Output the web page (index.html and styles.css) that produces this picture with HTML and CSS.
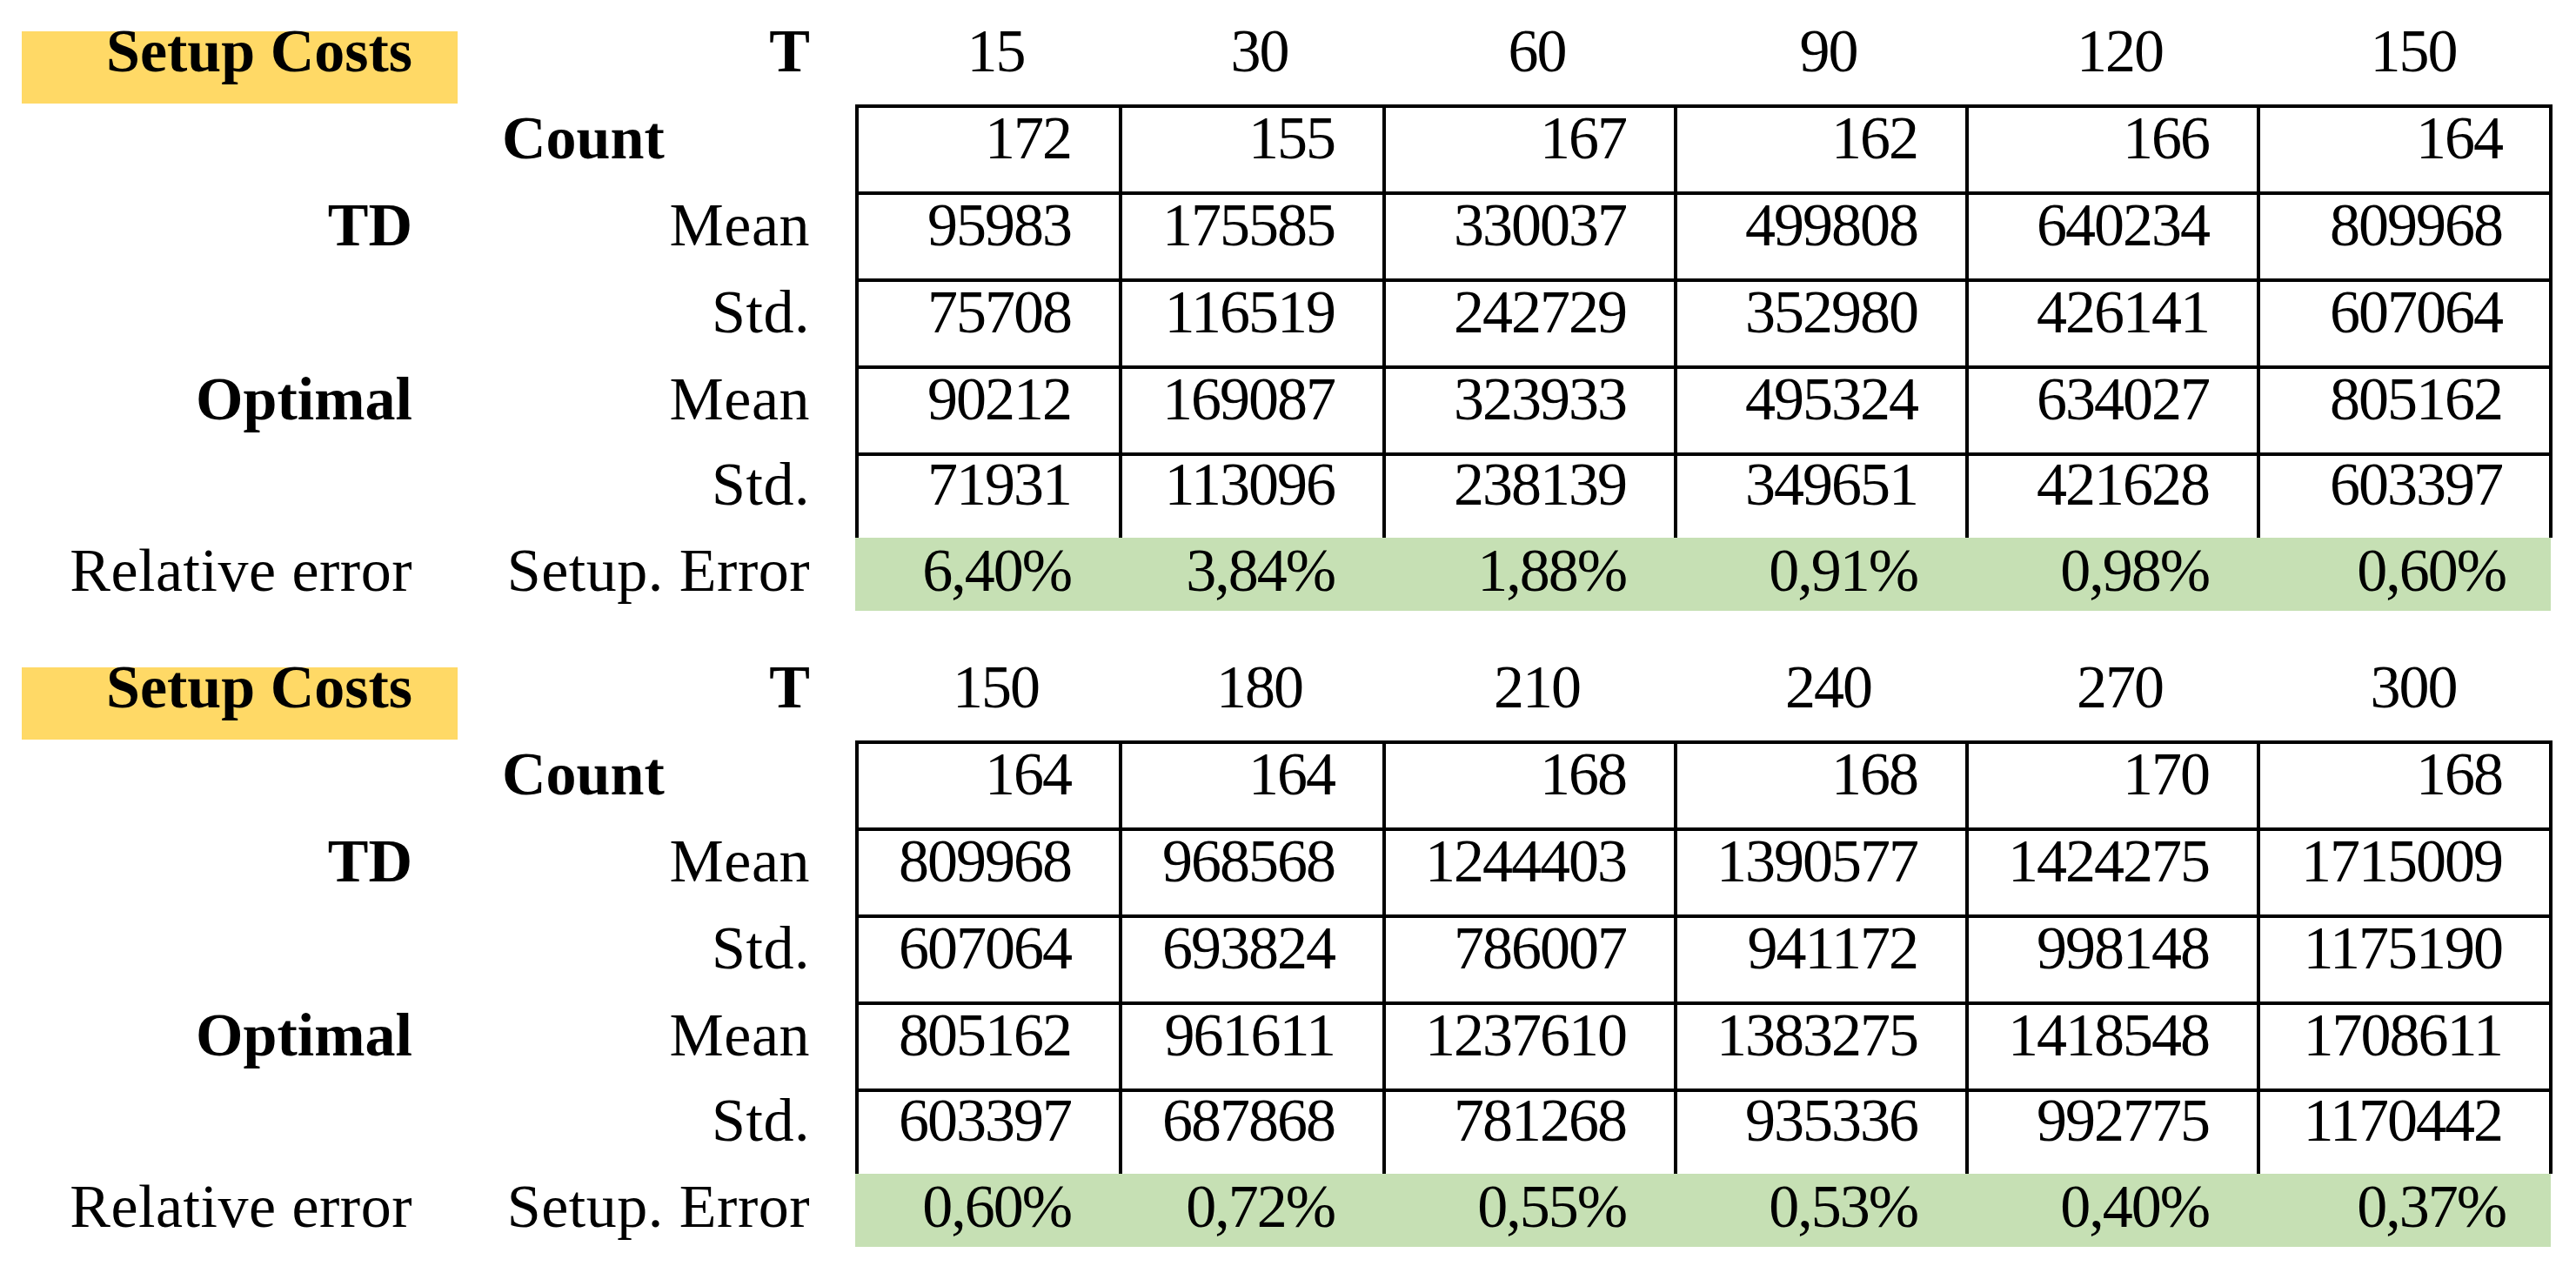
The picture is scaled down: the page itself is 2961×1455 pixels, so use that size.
FILE: index.html
```html
<!DOCTYPE html>
<html>
<head>
<meta charset="utf-8">
<link rel="stylesheet" href="styles.css">
<title>Setup Costs</title>
</head>
<body>
<div class="page">
  <div class="tbl">
    <div class="c title lbl b">Setup Costs</div>
    <div class="c lbl b">T</div>
    <div class="c hd">15</div><div class="c hd">30</div><div class="c hd">60</div><div class="c hd">90</div><div class="c hd">120</div><div class="c hd">150</div>

    <div class="c"></div>
    <div class="c lbl b left">Count</div>
    <div class="c d top first">172</div><div class="c d top">155</div><div class="c d top">167</div><div class="c d top">162</div><div class="c d top">166</div><div class="c d top last">164</div>

    <div class="c lbl b">TD</div>
    <div class="c lbl">Mean</div>
    <div class="c d first">95983</div><div class="c d">175585</div><div class="c d">330037</div><div class="c d">499808</div><div class="c d">640234</div><div class="c d last">809968</div>

    <div class="c"></div>
    <div class="c lbl">Std.</div>
    <div class="c d first">75708</div><div class="c d">116519</div><div class="c d">242729</div><div class="c d">352980</div><div class="c d">426141</div><div class="c d last">607064</div>

    <div class="c lbl b">Optimal</div>
    <div class="c lbl">Mean</div>
    <div class="c d first">90212</div><div class="c d">169087</div><div class="c d">323933</div><div class="c d">495324</div><div class="c d">634027</div><div class="c d last">805162</div>

    <div class="c"></div>
    <div class="c lbl">Std.</div>
    <div class="c d first">71931</div><div class="c d">113096</div><div class="c d">238139</div><div class="c d">349651</div><div class="c d">421628</div><div class="c d last">603397</div>

    <div class="c lbl err">Relative error</div>
    <div class="c lbl err">Setup. Error</div>
    <div class="c g">6,40%</div><div class="c g">3,84%</div><div class="c g">1,88%</div><div class="c g">0,91%</div><div class="c g">0,98%</div><div class="c g glast">0,60%</div>
  </div>

  <div class="tbl">
    <div class="c title lbl b">Setup Costs</div>
    <div class="c lbl b">T</div>
    <div class="c hd">150</div><div class="c hd">180</div><div class="c hd">210</div><div class="c hd">240</div><div class="c hd">270</div><div class="c hd">300</div>

    <div class="c"></div>
    <div class="c lbl b left">Count</div>
    <div class="c d top first">164</div><div class="c d top">164</div><div class="c d top">168</div><div class="c d top">168</div><div class="c d top">170</div><div class="c d top last">168</div>

    <div class="c lbl b">TD</div>
    <div class="c lbl">Mean</div>
    <div class="c d first">809968</div><div class="c d">968568</div><div class="c d">1244403</div><div class="c d">1390577</div><div class="c d">1424275</div><div class="c d last">1715009</div>

    <div class="c"></div>
    <div class="c lbl">Std.</div>
    <div class="c d first">607064</div><div class="c d">693824</div><div class="c d">786007</div><div class="c d">941172</div><div class="c d">998148</div><div class="c d last">1175190</div>

    <div class="c lbl b">Optimal</div>
    <div class="c lbl">Mean</div>
    <div class="c d first">805162</div><div class="c d">961611</div><div class="c d">1237610</div><div class="c d">1383275</div><div class="c d">1418548</div><div class="c d last">1708611</div>

    <div class="c"></div>
    <div class="c lbl">Std.</div>
    <div class="c d first">603397</div><div class="c d">687868</div><div class="c d">781268</div><div class="c d">935336</div><div class="c d">992775</div><div class="c d last">1170442</div>

    <div class="c lbl err">Relative error</div>
    <div class="c lbl err">Setup. Error</div>
    <div class="c g">0,60%</div><div class="c g">0,72%</div><div class="c g">0,55%</div><div class="c g">0,53%</div><div class="c g">0,40%</div><div class="c g glast">0,37%</div>
  </div>
</div>
</body>
</html>
```

FILE: styles.css
```css
html, body {
  margin: 0;
  padding: 0;
  background: #ffffff;
}

.page {
  padding: 36px 0 0 25px;
  display: flex;
  flex-direction: column;
  gap: 65px;
  font-family: "Liberation Serif", "Times New Roman", serif;
  font-size: 70px;
  line-height: 70px;
  color: #000000;
}

.tbl {
  display: grid;
  grid-template-columns: 501px 457px 303px 303px 335px 335px 335px 340px;
  grid-template-rows: 84px 100px 100px 100px 100px 98px 84px;
}

.c {
  box-sizing: border-box;
  display: flex;
  align-items: flex-end;
  justify-content: flex-end;
  padding: 0 55px 26px 0;
  white-space: nowrap;
  letter-spacing: -2px;
}

.lbl {
  letter-spacing: 0.5px;
  padding-right: 52px;
}

.b {
  font-weight: bold;
  letter-spacing: 0;
}

.left {
  justify-content: flex-start;
  padding-left: 51px;
}

.title {
  background: #ffd966;
  padding-bottom: 25px;
  margin-bottom: 1px;
}

.hd {
  justify-content: center;
  padding: 0 0 26px 20px;
}

.d {
  border-left: 4px solid #000;
  border-top: 4px solid #000;
}

.d.last {
  border-right: 4px solid #000;
  padding-right: 54px;
}

.err {
  padding-bottom: 11px;
}

.g {
  background: #c6e0b4;
  padding-bottom: 11px;
}

.g.glast {
  margin-right: 2px;
  padding-right: 52px;
}
```
